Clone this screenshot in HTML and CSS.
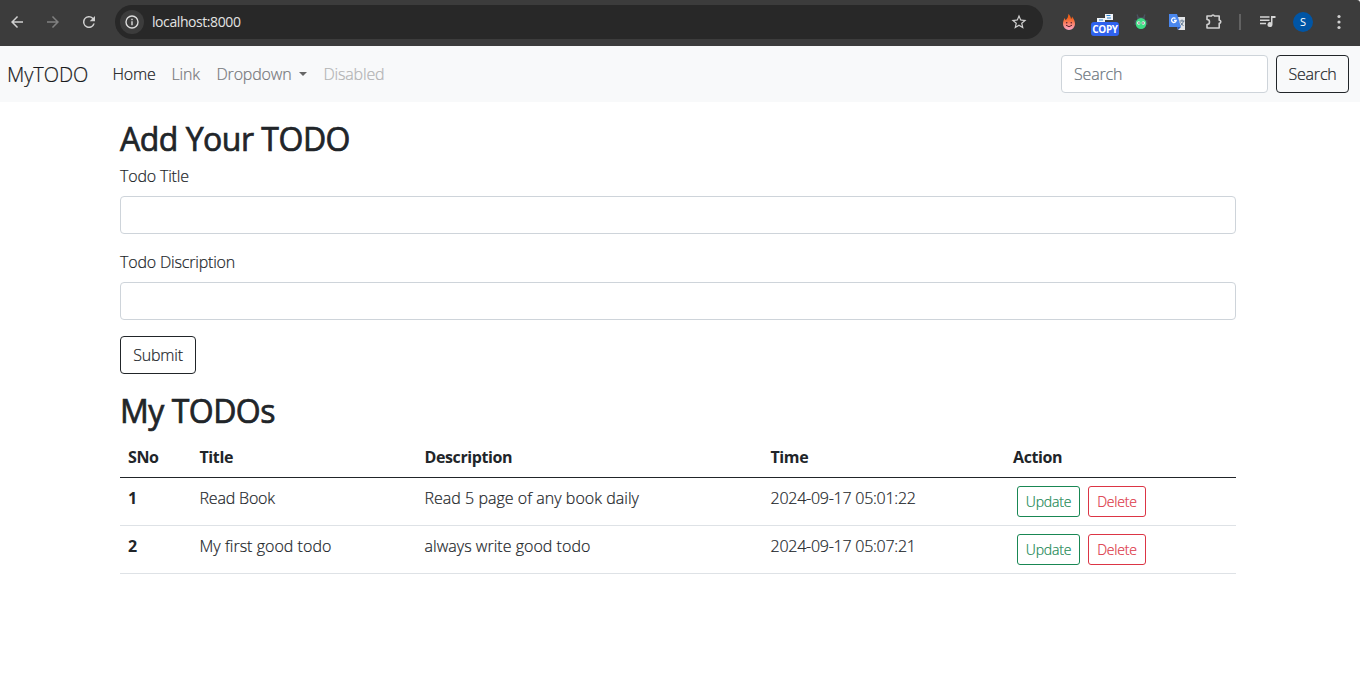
FILE: index.html
```html
<!DOCTYPE html>
<html lang="en">
<head>
<meta charset="utf-8">
<title>MyTODO</title>
<link rel="stylesheet" href="styles.css">
</head>
<body>
<header class="browser">
  <svg class="nav-icon" viewBox="0 0 24 24"><path d="M20 11H7.83l5.59-5.59L12 4l-8 8 8 8 1.41-1.41L7.83 13H20z"/></svg>
  <svg class="nav-icon dim" viewBox="0 0 24 24"><path d="M12 4l-1.41 1.41L16.17 11H4v2h12.17l-5.58 5.59L12 20l8-8z"/></svg>
  <svg class="nav-icon" viewBox="0 0 24 24"><path d="M17.65 6.35A8 8 0 1 0 19.73 14h-2.08A6 6 0 1 1 12 6c1.66 0 3.14.69 4.22 1.78L13 11h7V4z"/></svg>
  <div class="address">
    <span class="info"><svg viewBox="0 0 16 16"><circle cx="8" cy="8" r="6" fill="none" stroke="#dcdcdc" stroke-width="1.4"/><path d="M7.3 7.2h1.4v4H7.3zM7.3 4.8h1.4v1.4H7.3z" fill="#dcdcdc"/></svg></span>
    <span class="url">localhost:8000</span>
    <svg class="star" viewBox="0 0 24 24"><path d="M22 9.24l-7.19-.62L12 2 9.19 8.63 2 9.24l5.46 4.73L5.82 21 12 17.27 18.18 21l-1.63-7.03zM12 15.4l-3.76 2.27 1-4.28-3.32-2.88 4.38-.38L12 6.1l1.71 4.04 4.38.38-3.32 2.88 1 4.28z"/></svg>
  </div>
  <div class="tools">
    <svg class="flame" viewBox="0 0 14 18"><defs><linearGradient id="fire" x2="0" y2="1"><stop offset=".25" stop-color="#f4611a"/><stop offset="1" stop-color="#ffa6c9"/></linearGradient></defs><path d="M6.300 1c1.700 1.200 2.500 3 2.700 5 .8-.6 1-1.700 1-2.500C12 6 13 8.500 13 11a6 6 0 0 1-12 0c0-2.500.8-4 1.500-6 .6.6.8 1.500 1 2.300C5.500 5.500 6.500 3.500 6.300 1z" fill="url(#fire)"/><circle cx="4.700" cy="9.800" r=".8" fill="#5c2432"/><circle cx="9.300" cy="9.800" r=".8" fill="#5c2432"/><path d="M4 12.200q3 3 6 0" fill="none" stroke="#5c2432"/></svg>
    <span class="copy"><svg viewBox="0 0 16 8"><path d="M8 0h8v6H8zM0 4h8v4H0z" fill="#f2f5fa"/><path d="M9.500 1.500h4M10 4h4M2 6h4" stroke="#2a83d0" stroke-width="1.200"/></svg><span class="badge">COPY</span></span>
    <svg class="robot" viewBox="0 0 14 18"><path d="M4.500 5L3 1.500M9.500 5L11 1.500M1.200 7v5M12.800 7v5M3 5h8" stroke="#4c5261" stroke-width="1.300" fill="none"/><ellipse cx="7" cy="10.500" rx="5.300" ry="5.500" fill="#3ddc84"/><circle cx="4.700" cy="10" r="1.700" fill="#eee"/><circle cx="9.300" cy="10" r="1.700" fill="#eee"/><circle cx="5" cy="10" r=".7" fill="#333"/><circle cx="9" cy="10" r=".7" fill="#333"/></svg>
    <svg class="translate" viewBox="0 0 16 16"><path d="M6 3h10v13H9z" fill="#e3e5e8"/><path d="M0 0h8l4 13H0z" fill="#4a87ee"/><path d="M8 13h4l-3 3z" fill="#2858ba"/><path d="M6.500 4.500A2.300 2.300 0 1 0 7.200 6.500H5" fill="none" stroke="#fff" stroke-width="1.300"/><path d="M10.500 7h5M13 5.500V7M14.500 7q-.5 3-3 4.500M11.500 8.500l3 3.500" fill="none" stroke="#657b94"/></svg>
    <svg class="puzzle" viewBox="0 0 18 18"><path d="M2 4h4.500a1.600 1.600 0 0 1 3 0H14.200v4.200a1.500 1.500 0 0 1 0 3.200V16H2v-3.500a2.500 2.500 0 0 0 0-5z" fill="none" stroke="#d0d0d0" stroke-width="1.600" stroke-linejoin="round"/></svg>
    <i class="divider"></i>
    <svg class="music" viewBox="0 0 16 14"><path d="M0 2h9.500M0 5.200h9.500M0 8.400h6" stroke="#d5d5d5" stroke-width="1.500"/><path d="M11 1h4.500v2h-3v6.500A2.500 2.500 0 1 1 11 7.300z" fill="#d5d5d5"/></svg>
    <span class="avatar">S</span>
    <svg class="more" viewBox="0 0 4 16"><circle cx="2" cy="2.500" r="1.600"/><circle cx="2" cy="8" r="1.600"/><circle cx="2" cy="13.500" r="1.600"/></svg>
  </div>
</header>
<nav class="navbar">
  <a class="brand">MyTODO</a>
  <a class="link home">Home</a>
  <a class="link anchor">Link</a>
  <a class="link dropdown">Dropdown</a>
  <a class="link disabled">Disabled</a>
  <form class="search">
    <input class="control" type="text" placeholder="Search">
    <button class="btn" type="button">Search</button>
  </form>
</nav>
<main class="container">
  <h2 class="add-title">Add Your TODO</h2>
  <form class="todo-form">
    <label class="label">Todo Title</label>
    <input class="control" type="text">
    <label class="label">Todo Discription</label>
    <input class="control" type="text">
    <button class="btn submit" type="button">Submit</button>
  </form>
  <h2 class="list-title">My TODOs</h2>
  <table class="table">
    <colgroup><col class="c-no"><col class="c-title"><col class="c-desc"><col class="c-time"><col></colgroup>
    <thead><tr><th>SNo</th><th>Title</th><th>Description</th><th>Time</th><th>Action</th></tr></thead>
    <tbody>
      <tr><th>1</th><td>Read Book</td><td class="desc">Read 5 page of any book daily</td><td class="time">2024-09-17 05:01:22</td><td><div class="actions"><button class="btn small update">Update</button><button class="btn small delete">Delete</button></div></td></tr>
      <tr><th>2</th><td class="desc">My first good todo</td><td class="desc">always write good todo</td><td class="time">2024-09-17 05:07:21</td><td><div class="actions"><button class="btn small update">Update</button><button class="btn small delete">Delete</button></div></td></tr>
    </tbody>
  </table>
</main>
</body>
</html>
```
FILE: styles.css
```css
* { box-sizing: border-box; }
body { margin: 0; background: #fff; color: #212529; font: 300 16px/24px "Open Sans", "Noto Sans", sans-serif; letter-spacing: -.18px; overflow: hidden; }
svg { display: block; flex: none; }
.browser { height: 46px; background: #3c3c3c; display: flex; align-items: center; padding: 0 0 2px 8px; border-top-right-radius: 3px; }
.nav-icon { width: 18px; height: 18px; margin-right: 18px; fill: #d0d0d0; }
.nav-icon.dim { fill: #808080; }
.address { width: 928px; height: 34px; border-radius: 17px; background: #282828; display: flex; align-items: center; padding: 0 15px 0 5px; margin-left: -1px; }
.info { width: 24px; height: 24px; border-radius: 50%; background: #3c3c3c; display: grid; place-items: center; }
.info svg { width: 16px; height: 16px; }
.url { margin-left: 8px; color: #e3e3e3; font: 14px/20px "Open Sans", sans-serif; letter-spacing: -.42px; }
.star { width: 18px; height: 18px; margin-left: auto; fill: #d0d0d0; }
.tools { display: flex; align-items: center; margin-left: 19px; height: 44px; }
.flame { width: 14px; height: 18px; margin-right: 15px; }
.copy { width: 28px; height: 22px; display: flex; flex-direction: column; align-items: center; margin: 5px 15px 0 0; }
.copy svg { width: 16px; height: 8px; }
.badge { width: 28px; height: 14px; border-radius: 3px; background: #2f62ee; color: #fff; text-align: center; font: 700 10px/14px "Open Sans", sans-serif; letter-spacing: -.4px; }
.robot { width: 14px; height: 18px; margin-right: 21px; }
.translate { width: 16px; height: 16px; margin-right: 20px; }
.puzzle { width: 18px; height: 18px; margin: -2px 16px 0 0; }
.divider { width: 2px; height: 16px; background: #626262; margin-right: 19px; }
.music { width: 16px; height: 14px; margin-right: 17px; }
.avatar { width: 20px; height: 20px; border-radius: 50%; background: #0055a5; color: #fff; text-align: center; font: 11px/20px "Open Sans", sans-serif; }
.more { width: 4px; height: 16px; margin-left: 24px; fill: #d0d0d0; }
.navbar, .container { -webkit-text-stroke: .2px currentColor; }
.navbar { height: 56px; background: #f8f9fa; display: flex; align-items: center; padding: 0 11px 0 7px; }
.brand { width: 105px; padding-top: 2px; font-size: 20px; line-height: 30px; color: #1a1b1d; letter-spacing: -.05px; }
.link { padding-left: .5px; color: #76777a; }
.home { width: 59px; color: #1a1b1d; }
.anchor { width: 45px; }
.dropdown { width: 107px; display: flex; align-items: center; }
.dropdown::after { content: ""; margin-left: 8px; border: 4.500px solid transparent; border-top-color: #666; border-bottom: 0; }
.disabled { color: #b2b3b4; }
.search { display: flex; gap: 8px; margin-left: auto; }
.control { display: block; width: 100%; height: 38px; border: 1px solid #ced4da; border-radius: 4px; background: #fff; padding: 6px 12px; font: inherit; letter-spacing: inherit; }
.control::placeholder { color: #6c757d; opacity: 1; }
.search .control { width: 207px; }
.btn { width: 73px; height: 38px; border: 1px solid #212529; border-radius: 4px; background: transparent; color: #212529; font: inherit; letter-spacing: inherit; padding: 0; }
.container { width: 1116px; margin: 18px 0 0 120px; }
h2 { margin: 0 0 6px; font-size: 32px; line-height: 38px; font-weight: 400; letter-spacing: -.5px; -webkit-text-stroke: .7px currentColor; }
.label { display: block; margin-bottom: 8px; }
.todo-form .control { margin-bottom: 16px; }
.submit { width: 76px; }
.list-title { margin: 18px 0 6px; }
.table { width: 100%; table-layout: fixed; border-collapse: collapse; text-align: left; }
.c-no { width: 72px; } .c-title { width: 225px; } .c-desc { width: 346px; } .c-time { width: 242px; }
.table th, .table td { padding: 8px; height: 48px; vertical-align: top; border-bottom: 1px solid #dee2e6; }
.table th { font-weight: 700; letter-spacing: -.4px; -webkit-text-stroke: 0; }
.table thead th { height: 41px; padding: 9px 8px 7px; border-bottom-color: #212529; }
.table th + th, .table td { padding-left: 7.500px; }
.table th:last-child { padding-left: 8px; }
.table td:last-child { padding-left: 8px; }
.table .desc { letter-spacing: .03px; }
.table .time { letter-spacing: -.25px; }
.actions { display: flex; gap: 8px; padding-left: 4px; }
.small { width: 58px; height: 31px; border-radius: 3px; font-size: 14px; line-height: 21px; }
.update { width: 63px; color: #198754; border-color: #198754; }
.delete { color: #dc3545; border-color: #dc3545; }
```
